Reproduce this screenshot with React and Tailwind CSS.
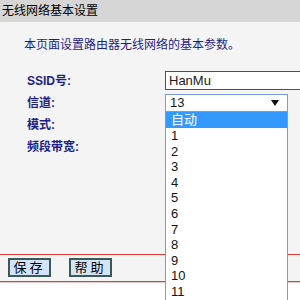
import React from 'react';

const FONT = { fontFamily: '"Liberation Sans", "Noto Sans CJK SC", sans-serif' };

const labels = ['SSID号:', '信道:', '模式:', '频段带宽:'];
// only the options that fit in the visible part of the open list
const channels = ['自动', '1', '2', '3', '4', '5', '6', '7', '8', '9', '10', '11'];

const Arrow = () => (
  <svg width="8" height="6" viewBox="0 0 8 6" className="block">
    <path d="M0 0 H8 L4 6 Z" fill="#111" />
  </svg>
);

export default function App() {
  return (
    <div className="relative w-[300px] h-[300px] overflow-hidden bg-white" style={FONT}>
      {/* title bar */}
      <div className="h-[22px] bg-[#d6d6d6] pl-[2px] text-[12px] leading-[22px] text-black">
        无线网络基本设置
      </div>

      {/* form body */}
      <div className="h-[232px] bg-[#f4f4f4]">
        <div className="pt-[15px] pl-[24px] text-[12px] leading-[16px] text-[#1e1e86]">
          本页面设置路由器无线网络的基本参数。
        </div>
        <div className="mt-[17px]">
          {labels.map((label, i) => (
            <div key={label} className="flex h-[22px]">
              <div className="w-[165px] pl-[27px] text-[12px] font-bold leading-[22px] text-[#1e1e86]">
                {label}
              </div>
              {i === 0 && (
                <div className="mt-[1px] h-[19px] flex-1 border border-[#3c5a55] bg-white pl-[3px] text-[13px] leading-[17px] text-[#1a1a1a] -mr-[10px]">
                  HanMu
                </div>
              )}
              {i === 1 && (
                <div className="mt-[2px] flex h-[18px] w-[123px] items-center justify-between border border-[#7a9bd4] bg-white pl-[4px] pr-[8px] text-[13px] text-[#1a1a1a]">
                  <span className="leading-[16px]">13</span>
                  <Arrow />
                </div>
              )}
            </div>
          ))}
        </div>
      </div>

      {/* button bar */}
      <div className="h-px bg-[#e03a3a]" />
      <div className="flex h-[26px] gap-[18px] bg-[#f4f4f4] pl-[8px] pt-[3px]">
        <button className="h-[19px] w-[43px] border-2 border-[#3c5a55] bg-[#d4e4f8] text-[13px] leading-[14px] tracking-[3px] text-black">
          保存
        </button>
        <button className="h-[19px] w-[43px] border-2 border-[#3c5a55] bg-[#d4e4f8] text-[13px] leading-[14px] tracking-[3px] text-black">
          帮助
        </button>
      </div>
      <div className="h-px bg-[#e03a3a]" />
      <div className="h-px bg-[#f2c8c8]" />

      {/* open channel dropdown */}
      <div className="absolute left-[165px] top-[112px] w-[123px] border border-t-0 border-[#7f9db9] bg-white pb-[20px]">
        {channels.map((c, i) => (
          <div
            key={c}
            className={
              i === 0
                ? 'h-[16px] bg-[#3399ff] pl-[5px] text-[13px] leading-[16px] text-white'
                : 'h-[15.6px] pl-[5px] text-[13px] leading-[15.6px] text-[#111]'
            }
          >
            {c}
          </div>
        ))}
      </div>
    </div>
  );
}
